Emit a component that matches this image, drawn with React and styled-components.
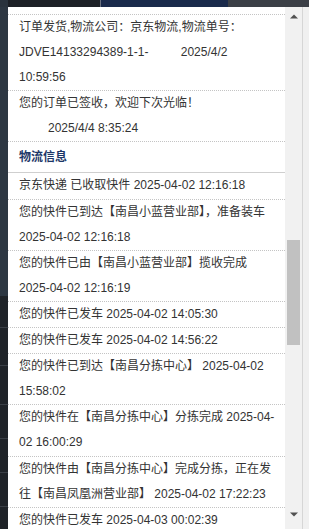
import React from 'react';
import styled, { createGlobalStyle } from 'styled-components';

const GlobalStyle = createGlobalStyle`
  html, body { margin: 0; padding: 0; }
  body {
    width: 309px;
    height: 529px;
    overflow: hidden;
    background: #1e2227;
    font-family: "Liberation Sans", Arial, "Noto Sans CJK SC", sans-serif;
  }
`;

const Screen = styled.div`
  display: flex;
  flex-direction: column;
  width: 309px;
  height: 529px;
  overflow: hidden;
`;

const TopBar = styled.div`
  display: flex;
  height: 7px;
  flex: none;
`;

const TopSeg = styled.div`
  width: ${(p) => p.$w}px;
  flex: ${(p) => (p.$grow ? 1 : 'none')};
  background: ${(p) => p.$bg};
`;

const Body = styled.div`
  display: flex;
  flex: 1;
  min-height: 0;
`;

const Gutter = styled.div`
  width: 8px;
  flex: none;
  background: linear-gradient(
    to bottom,
    #2d3742 0px,
    #2d3742 289px,
    #1f2328 289px,
    #1f2328 320px,
    #3a3f46 320px,
    #3a3f46 321px,
    #1f2328 321px,
    #1f2328 358px,
    #3a3f46 358px,
    #3a3f46 359px,
    #1f2328 359px,
    #1f2328 397px,
    #3a3f46 397px,
    #3a3f46 398px,
    #1f2328 398px,
    #1f2328 431px,
    #3a3f46 431px,
    #3a3f46 432px,
    #1f2328 432px,
    #1f2328 465px,
    #3a3f46 465px,
    #3a3f46 466px,
    #1f2328 466px,
    #1f2328 499px,
    #3a3f46 499px,
    #3a3f46 500px,
    #1f2328 500px
  );
`;

const Panel = styled.div`
  width: 277px;
  flex: none;
  background: #ffffff;
  overflow: hidden;
  color: #333333;
  font-size: 12px;
`;

const Spacer = styled.div`
  height: 7px;
  border-bottom: 1px dotted #c4c4c4;
`;

const Row = styled.div`
  padding: 0 10px 0 11px;
  line-height: 25.1px;
  border-bottom: 1px dotted #c4c4c4;
`;

const Time = styled.span`
  margin-left: 29px;
`;

const SectionTitle = styled.div`
  height: 30px;
  line-height: 30px;
  padding-left: 11px;
  font-weight: bold;
  color: #1d3768;
  border-bottom: 1px solid #cfcfcf;
`;

const ScrollBar = styled.div`
  width: 17px;
  flex: none;
  display: flex;
  flex-direction: column;
  background: #f1f1f1;
  padding-bottom: 6px;
`;

const ArrowBtn = styled.div`
  height: 17px;
  flex: none;
  display: flex;
  align-items: center;
  justify-content: center;
  padding-top: ${(p) => (p.$up ? 2 : 0)}px;
  box-sizing: border-box;
`;

const Track = styled.div`
  flex: 1;
  display: flex;
  flex-direction: column;
  align-items: center;
`;

const Thumb = styled.div`
  width: 13px;
  background: #c1c1c1;
  flex: none;
`;

const RightEdge = styled.div`
  width: 6px;
  flex: none;
  background: #f0f0f0;
  border-left: 1px solid #d6d6d6;
`;

const Arrow = ({ up }) => (
  <svg width="8" height="5" viewBox="0 0 8 5">
    {up ? (
      <polygon points="0,4.5 4,0.5 8,4.5" fill="#505050" />
    ) : (
      <polygon points="0,0.5 8,0.5 4,4.5" fill="#505050" />
    )}
  </svg>
);

const orderRows = [
  { text: '订单发货,物流公司：京东物流,物流单号：JDVE14133294389-1-1-', time: '2025/4/2 10:59:56' },
  { text: '您的订单已签收，欢迎下次光临！', time: '2025/4/4 8:35:24' },
];

const logisticsRows = [
  '京东快递 已收取快件 2025-04-02 12:16:18',
  '您的快件已到达【南昌小蓝营业部】，准备装车 2025-04-02 12:16:18',
  '您的快件已由【南昌小蓝营业部】揽收完成 2025-04-02 12:16:19',
  '您的快件已发车 2025-04-02 14:05:30',
  '您的快件已发车 2025-04-02 14:56:22',
  '您的快件已到达【南昌分拣中心】 2025-04-02 15:58:02',
  '您的快件在【南昌分拣中心】分拣完成 2025-04-02 16:00:29',
  '您的快件由【南昌分拣中心】完成分拣，正在发往【南昌凤凰洲营业部】 2025-04-02 17:22:23',
  '您的快件已发车 2025-04-03 00:02:39',
];

const thumb = { top: 216, height: 105 };

export default function App() {
  return (
    <>
      <GlobalStyle />
      <Screen>
        <TopBar>
          <TopSeg $w={8} $bg="#2a333d" />
          <TopSeg $w={92} $bg="#1c2026" />
          <TopSeg $w={1} $bg="#6a7180" />
          <TopSeg $w={127} $bg="#1a2a4b" />
          <TopSeg $grow $bg="#3b3f46" />
        </TopBar>
        <Body>
          <Gutter />
          <Panel>
            <Spacer />
            {orderRows.map((r, i) => (
              <Row key={i}>
                {r.text} <Time>{r.time}</Time>
              </Row>
            ))}
            <SectionTitle>物流信息</SectionTitle>
            {logisticsRows.map((t, i) => (
              <Row key={i}>{t}</Row>
            ))}
          </Panel>
          <ScrollBar>
            <ArrowBtn $up>
              <Arrow up />
            </ArrowBtn>
            <Track>
              <Thumb style={{ marginTop: thumb.top, height: thumb.height }} />
            </Track>
            <ArrowBtn>
              <Arrow />
            </ArrowBtn>
          </ScrollBar>
          <RightEdge />
        </Body>
      </Screen>
    </>
  );
}
